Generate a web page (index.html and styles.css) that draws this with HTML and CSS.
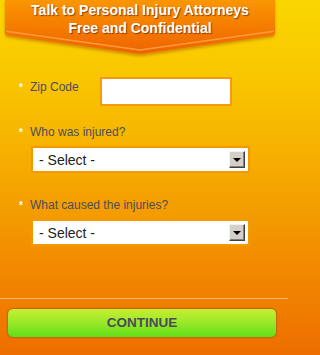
FILE: index.html
```html
<!DOCTYPE html>
<html>
<head>
<meta charset="utf-8">
<link rel="stylesheet" href="styles.css">
</head>
<body>
<div class="page">
  <header class="banner">
    <svg class="banner-bg" width="288" height="60" viewBox="0 0 288 60">
      <defs>
        <linearGradient id="bg" x1="0" y1="0" x2="0" y2="1">
          <stop offset="0" stop-color="#fa9600"/>
          <stop offset="1" stop-color="#ef6200"/>
        </linearGradient>
        <filter id="blur" x="-10%" y="-10%" width="120%" height="140%">
          <feGaussianBlur stdDeviation="1.6"/>
        </filter>
      </defs>
      <path d="M5,2 H275 V34 Q275,37 272,37.5 L146,55.5 Q140,56.5 134,55.5 L8,37.5 Q5,37 5,34 Z" fill="#b85a00" opacity="0.55" filter="url(#blur)"/>
      <path d="M5,0 H275 V32 Q275,35 272,35.5 L146,53 Q140,54 134,53 L8,35.5 Q5,35 5,32 Z" fill="url(#bg)"/>
      <path d="M6,31.2 L140,50 L274,31.2" fill="none" stroke="#ff9a3c" stroke-width="1.5"/>
    </svg>
    <h1 class="banner-title">Talk to Personal Injury Attorneys<br>Free and Confidential</h1>
  </header>

  <form class="form">
    <div class="row-zip">
      <span class="star">*</span>
      <label class="label label-zip">Zip Code</label>
      <div class="input"></div>
    </div>

    <div class="field field-who">
      <div class="label-row"><span class="star">*</span><label class="label">Who was injured?</label></div>
      <div class="select"><span class="select-text">- Select -</span><span class="select-btn"><span class="tri"></span></span></div>
    </div>

    <div class="field field-what">
      <div class="label-row"><span class="star">*</span><label class="label">What caused the injuries?</label></div>
      <div class="select"><span class="select-text">- Select -</span><span class="select-btn"><span class="tri"></span></span></div>
    </div>
  </form>

  <div class="separator"></div>
  <div class="actions">
    <div class="btn">CONTINUE</div>
  </div>
</div>
</body>
</html>
```

FILE: styles.css
```css
html, body {
  margin: 0;
  padding: 0;
}
body {
  width: 288px;
  height: 355px;
  overflow: hidden;
  font-family: "Liberation Sans", Arial, sans-serif;
  background: linear-gradient(to bottom, #fad600 0px, #f9c800 70px, #f7b400 140px, #f4a000 200px, #f28a00 265px, #ee6e00 355px);
}
.page {
  width: 288px;
  height: 355px;
}
.banner {
  position: relative;
  height: 58px;
}
.banner-bg {
  position: absolute;
  left: 0;
  top: 0;
}
.banner-title {
  position: relative;
  margin: 0;
  padding-top: 1px;
  text-align: center;
  width: 280px;
  color: #fff;
  font-size: 14px;
  line-height: 18px;
  font-weight: bold;
  text-shadow: 1px 1px 1px rgba(110, 40, 0, 0.75);
}
.form {
  margin: 0;
  padding: 0;
}
.row-zip {
  display: flex;
  align-items: flex-start;
  margin-top: 19px;
  padding-left: 18px;
}
.star {
  width: 12px;
  color: #fff;
  font-size: 10px;
  line-height: 14px;
  font-weight: bold;
  margin-top: 4px;
  text-indent: 1px;
}
.label {
  color: #4d4d5e;
  font-size: 12px;
  line-height: 14px;
}
.label-zip {
  margin-top: 3px;
  width: 70px;
}
.input {
  width: 128px;
  height: 25px;
  border: 2px solid #f39a10;
  background: #fff;
}
.field {
  padding-left: 18px;
}
.field-who {
  margin-top: 19px;
}
.field-what {
  margin-top: 25px;
}
.label-row {
  display: flex;
  align-items: flex-start;
}
.label-row .star {
  margin-top: 1px;
}
.select {
  margin-top: 6px;
  margin-left: 13px;
  width: 206px;
  height: 23px;
  border: 2px solid #f39a00;
  background: #fff;
  display: flex;
  align-items: center;
  justify-content: space-between;
  padding-left: 6px;
  padding-right: 3px;
}
.select-text {
  color: #222;
  font-size: 14px;
  line-height: 16px;
}
.select-btn {
  width: 14px;
  height: 15px;
  background: #d4d0c8;
  border-top: 1px solid #f4f2ee;
  border-left: 1px solid #f4f2ee;
  border-right: 1px solid #404040;
  border-bottom: 1px solid #404040;
  box-shadow: inset -1px -1px 0 #808080;
  display: flex;
  align-items: center;
  justify-content: center;
}
.tri {
  width: 0;
  height: 0;
  border-left: 4px solid transparent;
  border-right: 4px solid transparent;
  border-top: 4px solid #000;
  margin-top: 1px;
}
.separator {
  margin-top: 52px;
  height: 1px;
  background: #f7b27a;
}
.actions {
  padding: 9px 11px 0 7px;
}
.btn {
  height: 28px;
  border: 1px solid #c8660e;
  border-radius: 6px;
  background: linear-gradient(to bottom, #c6ee30 0%, #9ee82a 45%, #5ee018 100%);
  color: #4a4a5c;
  font-size: 13.5px;
  font-weight: bold;
  line-height: 28px;
  text-align: center;
  box-shadow: 0 0 1px #b05a00;
}
```
